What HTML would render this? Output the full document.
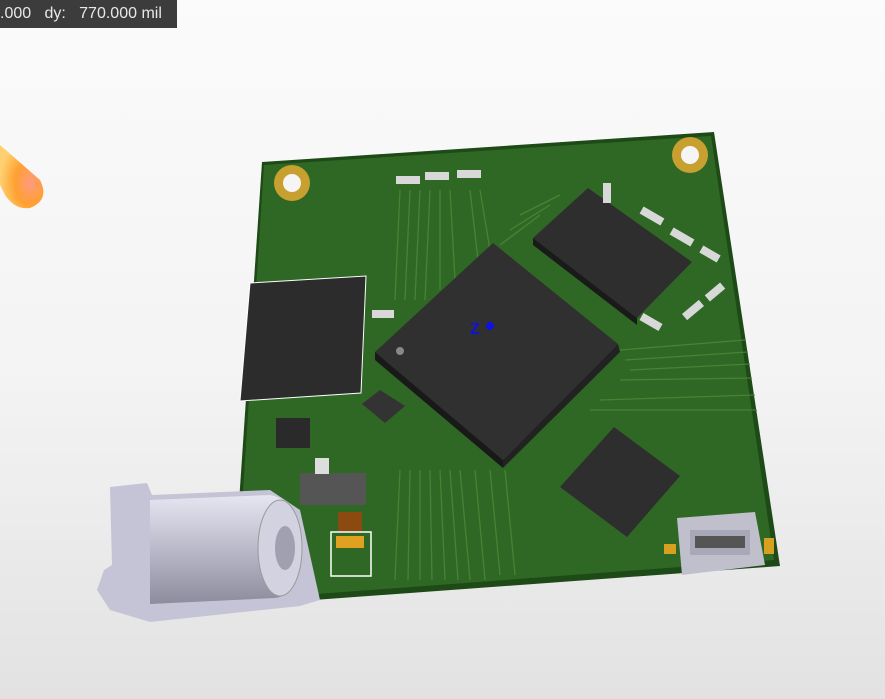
<!DOCTYPE html>
<html><head><meta charset="utf-8"><style>
html,body{margin:0;padding:0;width:885px;height:699px;overflow:hidden;background:linear-gradient(#fbfbfb 0%,#f3f3f3 55%,#e2e2e2 100%);font-family:"Liberation Sans",sans-serif}
#lbl{position:absolute;left:0;top:0;width:177px;height:28px;background:#3c3c3c;color:#e8e8e8;font-size:16px;line-height:28px;white-space:pre}
svg{position:absolute;left:0;top:0}
</style></head><body>
<svg width="885" height="699" viewBox="0 0 885 699">
<defs>
<radialGradient id="og" cx="0.7" cy="0.6" r="0.7"><stop offset="0" stop-color="#ff9a80"/><stop offset="0.5" stop-color="#ffa030"/><stop offset="1" stop-color="#ffd070"/></radialGradient>
<linearGradient id="cy" x1="0" y1="0" x2="0" y2="1"><stop offset="0" stop-color="#e6e6f2"/><stop offset="0.5" stop-color="#b9b9c9"/><stop offset="1" stop-color="#8c8c9c"/></linearGradient>
</defs>
<path d="M0 145 L40 180 Q50 200 30 208 Q15 210 5 195 L0 185Z" fill="url(#og)"/>
<polygon points="262,162 714,132 780,566 232,606" fill="#1d4a17"/>
<polygon points="264,165 711,136 774,560 236,600" fill="#2f6824"/>
<g stroke="#4d8a3a" stroke-width="1.3" fill="none" opacity="0.8">
<path d="M400 190 L395 300 M410 190 L405 300 M420 190 L415 300 M430 190 L425 300 M440 190 L440 290 M450 190 L455 280 M470 190 L478 260 M480 190 L490 250"/>
<path d="M400 470 L395 580 M410 470 L408 580 M420 470 L420 580 M430 470 L432 580 M440 470 L445 580 M450 470 L458 580 M460 470 L470 580 M475 470 L485 580 M490 470 L500 575 M505 470 L515 575"/>
<path d="M620 350 L745 340 M625 360 L748 352 M630 370 L750 364 M620 380 L752 378 M600 400 L755 395 M590 410 L757 410"/>
<path d="M520 215 L560 195 M510 230 L550 205 M500 245 L540 215"/>
</g>
<polygon points="250,283 366,276 361,393 240,401" fill="#2c2c2c" stroke="#fff" stroke-width="1"/>
<polygon points="533,238 588,188 692,262 637,318" fill="#2e2e2e"/>
<polygon points="533,238 533,245 637,325 637,318" fill="#1a1a1a"/>
<polygon points="375,352 493,243 618,344 503,460" fill="#303030"/>
<polygon points="375,352 375,360 503,468 503,460" fill="#191919"/>
<polygon points="503,460 503,468 620,352 618,344" fill="#222"/>
<circle cx="400" cy="351" r="4" fill="#888"/>
<text x="470" y="334" fill="#1010e0" font-size="16" font-weight="bold">Z</text>
<circle cx="490" cy="326" r="4" fill="#1010e0"/>
<polygon points="560,487 614,427 680,476 627,537" fill="#2e2e2e"/>
<polygon points="362,404 380,390 405,406 385,423" fill="#333"/>
<rect x="276" y="418" width="34" height="30" fill="#2a2a2a"/>
<g fill="#d8d8d8">
<rect x="396" y="176" width="24" height="8"/><rect x="425" y="172" width="24" height="8"/><rect x="457" y="170" width="24" height="8"/>
<rect x="640" y="212" width="24" height="8" transform="rotate(30 652 216)"/><rect x="670" y="233" width="24" height="8" transform="rotate(30 682 237)"/>
<rect x="700" y="250" width="20" height="8" transform="rotate(30 710 254)"/><rect x="640" y="318" width="22" height="8" transform="rotate(30 651 322)"/>
<rect x="682" y="306" width="22" height="8" transform="rotate(-40 693 310)"/><rect x="705" y="288" width="20" height="8" transform="rotate(-40 715 292)"/>
<rect x="372" y="310" width="22" height="8"/><rect x="603" y="183" width="8" height="20"/>
</g>
<g fill="#c8a030">
<circle cx="292" cy="183" r="18"/><circle cx="690" cy="155" r="18"/>
</g>
<circle cx="292" cy="183" r="9" fill="#f5f5f5"/><circle cx="690" cy="155" r="9" fill="#f5f5f5"/>
<rect x="300" y="473" width="66" height="32" fill="#555"/>
<rect x="315" y="458" width="14" height="16" fill="#ddd"/>
<rect x="338" y="512" width="24" height="20" fill="#8a4a10"/>
<rect x="336" y="536" width="28" height="12" fill="#e0a020"/>
<rect x="331" y="532" width="40" height="44" fill="none" stroke="#fff" stroke-width="1.5"/>
<path d="M110 487 L147 483 L152 495 L270 490 L300 510 L320 600 L300 606 L150 622 L110 610 L97 590 L104 570 L112 565Z" fill="#c4c4d6"/>
<path d="M150 500 L270 495 Q300 500 302 548 Q300 595 275 598 L150 604Z" fill="url(#cy)"/>
<ellipse cx="280" cy="548" rx="22" ry="48" fill="#d2d2e0" stroke="#999" stroke-width="1"/>
<ellipse cx="285" cy="548" rx="10" ry="22" fill="#a0a0b0"/>
<path d="M677 518 L755 512 L765 565 L682 575Z" fill="#c0c0cc"/>
<rect x="690" y="530" width="60" height="25" fill="#a8a8b8"/>
<rect x="695" y="536" width="50" height="12" fill="#555"/>
<rect x="664" y="544" width="12" height="10" fill="#d8a020"/><rect x="764" y="538" width="10" height="16" fill="#d8a020"/>
</svg>
<div id="lbl">.000   dy:   770.000 mil</div>
</body></html>
